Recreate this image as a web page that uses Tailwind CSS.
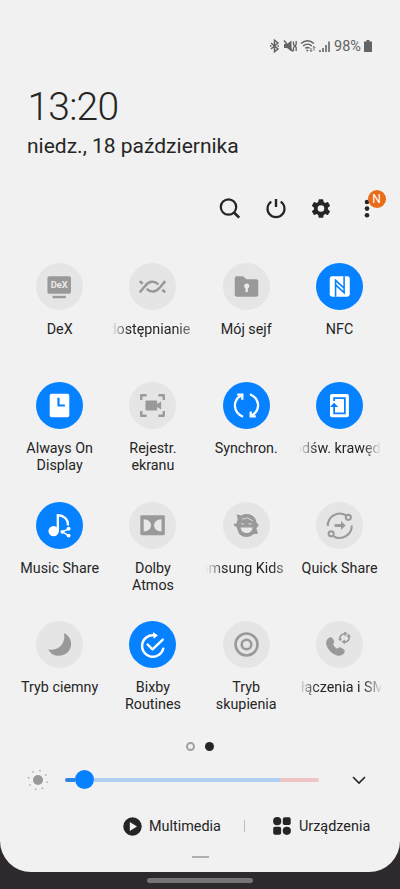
<!DOCTYPE html>
<html lang="pl">
<head>
<meta charset="utf-8">
<title>Panel szybkich ustawień</title>
<script src="https://cdn.jsdelivr.net/npm/@tailwindcss/browser@4"></script>
</head>
<body class="w-[400px] h-[889px] overflow-hidden bg-[#2e292c] font-[Roboto,sans-serif] text-[#252525]">
<main class="w-[400px] h-[872px] rounded-b-[31px] bg-[#f1f1f1] flex flex-col">

  <!-- Status bar -->
  <header class="h-[60px] pt-[37px] pr-[28.5px] flex justify-end items-start text-[#646464] shrink-0">
    <svg width="76" height="18" viewBox="0 0 76 18" fill="none" stroke="#646464">
      <path d="M1 6l7 6-3.500 2.800V3.200L8 6l-7 6" stroke-width="1.500"/><path d="M0 9h1.500M7.500 9h1.500" stroke-width="1.600"/>
      <path d="M14 7h3l4.500-3.500v11L17 11h-3z" fill="#646464" stroke="none"/><path d="M14 3.500l9 11" stroke-width="1.400"/><path d="M23.500 4.500v2.500l1 2-1 2v3M26.200 4v3l-.8 2 .8 2v3" stroke-width="1.300"/>
      <path d="M31 6.500c4-3.500 9-3.500 13 0M33 9c3-2.500 6-2.500 9 0M35.200 11.300c1.600-1.200 3-1.200 4.400 0" stroke-width="1.400"/><circle cx="37.300" cy="13.500" r="1" fill="#646464" stroke="none"/><path d="M41 11v3.500M39.800 13.300l1.200 1.200 1.200-1.200M44 13.500v-4M42.800 10.700l1.200-1.200 1.200 1.200" stroke-width=".9"/>
      <path d="M50 13v2M53 11v4M56 8v7M59 4.500v10.500" stroke-width="1.600"/>
    </svg>
    <span class="-ml-[12px] text-[14.5px] leading-[20px] w-[28.5px] whitespace-nowrap">98%</span>
    <svg class="mt-[2px] ml-[1px]" width="8" height="14" viewBox="0 0 8 14"><path d="M2.500 1h3v1.500H8V13H0V2.500h2.500z" fill="#646464"/></svg>
  </header>

  <section class="pl-[27.5px] h-[122px] shrink-0">
    <h1 class="pt-[24px] text-[39px] leading-[46px] font-light tracking-[-0.8px]">13:20</h1>
    <p class="-ml-[0.5px] mt-[3px] text-[21px] leading-[26px] whitespace-nowrap">niedz., 18 października</p>
  </section>

  <nav class="h-[80.5px] pt-[14px] pl-[218px] flex gap-[21.5px] shrink-0">
    <svg width="24" height="24" viewBox="0 0 24 24" fill="none" stroke="#252525" stroke-width="2.200"><circle cx="10.500" cy="11" r="7.700"/><path d="M16 16.500l5.200 5.200" stroke-width="2.600"/></svg>
    <svg width="24" height="24" viewBox="0 0 24 24" fill="none" stroke="#252525" stroke-width="2.200"><path d="M7.300 5.600a8.500 8.500 0 1 0 9.400 0"/><path d="M12 3v8" stroke-width="2.400"/></svg>
    <svg width="24" height="24" viewBox="0 0 24 24"><path transform="translate(.3 .9) scale(.97)" fill="#252525" fill-rule="evenodd" d="M19.140 12.940c.04-.3.060-.61.060-.94s-.02-.64-.07-.94l2.030-1.580a.5.5 0 0 0 .12-.61l-1.920-3.320a.5.5 0 0 0-.59-.22l-2.390.96a7 7 0 0 0-1.620-.94l-.36-2.540a.5.500 0 0 0-.48-.41h-3.840a.5.500 0 0 0-.47.41l-.36 2.540a7 7 0 0 0-1.620.94l-2.390-.96a.5.500 0 0 0-.59.22L2.740 8.870a.5.500 0 0 0 .12.610l2.030 1.580a6 6 0 0 0 0 1.880l-2.030 1.580a.5.500 0 0 0-.12.610l1.920 3.320c.12.220.37.290.59.220l2.390-.96c.5.380 1.030.7 1.620.94l.36 2.540c.05.240.24.410.48.410h3.840c.24 0 .44-.17.470-.41l.36-2.540a7 7 0 0 0 1.620-.94l2.390.96c.22.080.47 0 .59-.22l1.920-3.320a.5.500 0 0 0-.12-.61zM12 15.400a3.400 3.400 0 1 1 0-6.800 3.400 3.400 0 0 1 0 6.800z"/></svg>
    <div class="relative">
      <svg width="24" height="24" viewBox="0 0 24 24" fill="#252525"><circle cx="12" cy="6" r="2.300"/><circle cx="12" cy="12.600" r="2.300"/><circle cx="12" cy="19.200" r="2.300"/></svg>
      <span class="absolute left-[13px] -top-[6.5px] w-[18px] h-[18px] rounded-full bg-[#e86c1a] text-white text-[12px] leading-[18px] text-center">N</span>
    </div>
  </nav>

  <section class="grid grid-cols-4 w-[373.2px] ml-[13px] auto-rows-[119.5px] h-[477px] shrink-0 text-[14.3px] leading-[17px] text-center">

    <div class="flex flex-col items-center">
      <svg width="47" height="47" viewBox="0 0 48 48"><circle cx="24" cy="24" r="24" fill="#e5e5e5"/><rect x="11.700" y="13.500" width="24" height="18" rx="1.800" fill="#999"/><rect x="17" y="33.500" width="13.500" height="2.500" fill="#999"/><text x="23.700" y="26" font-size="9.600" font-weight="700" fill="#e9e9e9" text-anchor="middle" font-family="Roboto">DeX</text></svg>
      <span class="mt-[11px]">DeX</span>
    </div>

    <div class="flex flex-col items-center">
      <svg width="47" height="47" viewBox="0 0 48 48" fill="none" stroke="#999" stroke-width="2.500"><circle cx="24" cy="24" r="24" fill="#e5e5e5" stroke="none"/><path d="M11 30l5-6c4.500-5.500 9.500-6.500 14-2.200M37 18.500l-5 6c-4.500 5.500-9.500 6.200-14 1.800M11 18.500l3 2.700M34 27.300l3 2.700"/></svg>
      <span class="mt-[11px] w-[81px] overflow-hidden flex justify-end pr-[3px] whitespace-nowrap mask-[linear-gradient(to_right,transparent_0,#000_17px,#000_62px,#0008_78px)]">Udostępnianie</span>
    </div>

    <div class="flex flex-col items-center">
      <svg width="47" height="47" viewBox="0 0 48 48"><circle cx="24" cy="24" r="24" fill="#e5e5e5"/><path d="M12 15.500q0-2 2-2h6.500l3.500 3h10q2 0 2 2V32.500q0 2-2 2H14q-2 0-2-2z" fill="#999"/><circle cx="24.200" cy="23.500" r="2.600" fill="#e9e9e9"/><path d="M23 24h2.400v5.800H23z" fill="#e9e9e9"/></svg>
      <span class="mt-[11px]">Mój sejf</span>
    </div>

    <div class="flex flex-col items-center">
      <svg width="47" height="47" viewBox="0 0 48 48"><circle cx="24" cy="24" r="24" fill="#0681ff"/><rect x="14" y="13.500" width="20.500" height="21" rx="2.500" fill="#fff"/><path d="M20 34.500V17.700l8.700 8M28.700 13.500v16.800L20 22.300" fill="none" stroke="#0681ff" stroke-width="1.600"/></svg>
      <span class="mt-[11px]">NFC</span>
    </div>

    <div class="flex flex-col items-center">
      <svg width="47" height="47" viewBox="0 0 48 48"><circle cx="24" cy="24" r="24" fill="#0681ff"/><rect x="14" y="12" width="20" height="24" rx="2" fill="#fff"/><path d="M23 16v8h6.500" fill="none" stroke="#0681ff" stroke-width="2.200"/></svg>
      <span class="mt-[11px]">Always On<br>Display</span>
    </div>

    <div class="flex flex-col items-center">
      <svg width="47" height="47" viewBox="0 0 48 48"><circle cx="24" cy="24" r="24" fill="#e5e5e5"/><path d="M12.500 18.500v-5h5.500M30 13.500h5.500v5M35.500 29.500v5h-5.500M18 34.500h-5.500v-5" fill="none" stroke="#999" stroke-width="2.400" stroke-linejoin="round"/><rect x="16.800" y="19" width="12" height="10" rx="1" fill="#999"/><path d="M28 23l4.800-3v8L28 25z" fill="#999"/></svg>
      <span class="mt-[11px]">Rejestr.<br>ekranu</span>
    </div>

    <div class="flex flex-col items-center">
      <svg width="47" height="47" viewBox="0 0 48 48" fill="none" stroke="#fff" stroke-width="2.300"><circle cx="24" cy="24" r="24" fill="#0681ff" stroke="none"/><path d="M20.500 35.500C10 31 9.500 19 18.500 13.800M27.500 12.500c10.500 4.500 11 16.500 2 21.700"/><path d="M14.500 12.800h5.200v5.200M33.500 35.200h-5.200v-5.200"/></svg>
      <span class="mt-[11px]">Synchron.</span>
    </div>

    <div class="flex flex-col items-center">
      <svg width="47" height="47" viewBox="0 0 48 48"><circle cx="24" cy="24" r="24" fill="#0681ff"/><rect x="14.300" y="12.300" width="19.300" height="23.700" rx="2" fill="#fff"/><path d="M18.500 19.500v-3h11v15.500h-11V24" fill="none" stroke="#0681ff" stroke-width="1.800"/><path d="M14.300 25.500l4.200-4.200 4.200 4.200z" fill="#0681ff"/></svg>
      <span class="mt-[11px] w-[82px] overflow-hidden flex justify-center whitespace-nowrap mask-[linear-gradient(to_right,transparent_0,#000_18px,#000_64px,transparent_82px)]"><span class="shrink-0 ml-[-3px]">Podśw. krawędzi</span></span>
    </div>

    <div class="flex flex-col items-center">
      <svg width="47" height="47" viewBox="0 0 48 48"><circle cx="24" cy="24" r="24" fill="#0681ff"/><circle cx="18" cy="29.700" r="5.300" fill="#fff"/><path d="M22.300 30V13.500c5.500 0 10.700 3.500 10.300 10.500" fill="none" stroke="#fff" stroke-width="2.400"/><path d="M33.300 27.500l-6.300 3 6.300 3.800" fill="none" stroke="#fff" stroke-width="1.500"/><g fill="#fff"><circle cx="33.300" cy="27.300" r="2"/><circle cx="27" cy="30.500" r="2"/><circle cx="33.300" cy="34.300" r="2"/></g></svg>
      <span class="mt-[11px] whitespace-nowrap">Music Share</span>
    </div>

    <div class="flex flex-col items-center">
      <svg width="47" height="47" viewBox="0 0 48 48"><circle cx="24" cy="24" r="24" fill="#e5e5e5"/><rect x="11.600" y="13.500" width="25" height="20.500" rx="1.500" fill="#999"/><path d="M15 17.500c10 0 10 12.500 0 12.500zM33.200 17.500c-10 0-10 12.500 0 12.500z" fill="#e9e9e9"/></svg>
      <span class="mt-[11px]">Dolby<br>Atmos</span>
    </div>

    <div class="flex flex-col items-center">
      <svg width="47" height="47" viewBox="0 0 48 48"><circle cx="24" cy="24" r="24" fill="#e5e5e5"/><path d="M14 12.500l4.500 1.200c5-2.700 12-1.500 15 4.300l1 3.500q2.500 1 1.300 3.500l-1.800 1.500 1.800 6-4.500.2c-4.500 4.500-12 4-15.300-1l-2-6q-3.500-1-3-3.500h2.500l1.500-4z" fill="#999"/><path d="M18 26h12.200c-.5 3.800-2.800 5.600-6.100 5.600S18.500 29.800 18 26z" fill="#e9e9e9"/><path d="M19.500 17.500l5.500-1.200 5.500 3" stroke="#d9d9d9" stroke-width="1" fill="none"/><path d="M18.500 22.300h3M26 22.300h3" stroke="#d0d0d0" stroke-width="1.200"/></svg>
      <span class="mt-[11px] w-[81px] overflow-hidden flex justify-end pr-[3px] whitespace-nowrap mask-[linear-gradient(to_right,transparent_0,#000_18px,#000_64px,#0008_79px)]">Samsung Kids</span>
    </div>

    <div class="flex flex-col items-center">
      <svg width="47" height="47" viewBox="0 0 48 48" fill="none" stroke="#999" stroke-width="2.100"><circle cx="24" cy="24" r="24" fill="#e5e5e5" stroke="none"/><path d="M12 24.500A12.300 12.300 0 0 1 30.500 13.500M36.500 24A12.300 12.300 0 0 1 18 35"/><circle cx="33" cy="15.700" r="2.600"/><circle cx="15.500" cy="32.500" r="2.600"/><path d="M19 24h7" stroke-width="3"/><path d="M25.500 19.500l4.700 4.500-4.700 4.500z" fill="#999" stroke="none"/></svg>
      <span class="mt-[11px] whitespace-nowrap">Quick Share</span>
    </div>

    <div class="flex flex-col items-center">
      <svg width="47" height="47" viewBox="0 0 48 48"><circle cx="24" cy="24" r="24" fill="#e5e5e5"/><path d="M28.500 12.300c9 4 9.500 15.500 3 20.500-6.500 5-16 3-19-4 10 3 18.500-6 16-16.500z" fill="#999"/></svg>
      <span class="mt-[11px] whitespace-nowrap">Tryb ciemny</span>
    </div>

    <div class="flex flex-col items-center">
      <svg width="47" height="47" viewBox="0 0 48 48" fill="none" stroke="#fff" stroke-width="2.400"><circle cx="24" cy="24" r="24" fill="#0681ff" stroke="none"/><path d="M25.500 14.600A11 11 0 1 0 35 28.200" stroke-linecap="round"/><path d="M24.500 11.200l5 3.500-4.300 3.300z" fill="#fff" stroke="none"/><path d="M19 24l5 5 10.500-10" stroke-linecap="round" stroke-linejoin="round"/></svg>
      <span class="mt-[11px]">Bixby<br>Routines</span>
    </div>

    <div class="flex flex-col items-center">
      <svg width="47" height="47" viewBox="0 0 48 48" fill="none" stroke="#999"><circle cx="24" cy="24" r="24" fill="#e5e5e5" stroke="none"/><circle cx="24" cy="24" r="11.200" stroke-width="2.600"/><circle cx="24" cy="24" r="4.900" stroke-width="2.600"/></svg>
      <span class="mt-[11px]">Tryb<br>skupienia</span>
    </div>

    <div class="flex flex-col items-center">
      <svg width="47" height="47" viewBox="0 0 48 48"><circle cx="24" cy="24" r="24" fill="#e5e5e5"/><path d="M13 18.500c1.500-1.500 2.700-1.200 3.500 0l1.200 2.300c.6 1.500-1.500 2.200-1.200 3.200 1 2.500 3 4.300 5.200 5.300 1.200.2 1.700-2 3.200-1.500l2.700 1.700c1.200 1 1.200 2-.3 3.500-3 3-8 1.500-12-2.500-4-4.200-5.500-9-2.300-12z" fill="#999" stroke="#999" stroke-width="1.800"/><path d="M24.500 18.500q-.6-4.500 4.500-5.500M33.500 15.700q1.200 5-4.200 5.800" fill="none" stroke="#999" stroke-width="1.700"/><path d="M28.500 10.800l3.800 1.700-3 3.300zM29.500 19l.2 4.800-3.700-2.500zM22.500 18h4.200l-1.900 2.600zM31 16h4.800l-2.500-3z" fill="#999"/></svg>
      <span class="mt-[11px] w-[82px] overflow-hidden flex justify-center whitespace-nowrap mask-[linear-gradient(to_right,transparent_0,#000_18px,#000_64px,transparent_84px)]"><span class="shrink-0 -ml-[2px]">Połączenia i SMS</span></span>
    </div>
  </section>

  <div class="h-[13px] flex justify-center gap-[10px] items-center shrink-0">
    <span class="w-[9px] h-[9px] rounded-full border-2 border-[#a0a0a0]"></span>
    <span class="w-[9px] h-[9px] rounded-full bg-[#252525]"></span>
  </div>

  <div class="h-[54.5px] pl-[26px] flex items-center shrink-0">
    <svg width="24" height="24" viewBox="0 0 24 24" fill="#999"><circle cx="12" cy="12" r="5"/><circle cx="14" cy="2.800" r=".8"/><circle cx="7" cy="4" r=".8"/><circle cx="2.700" cy="9.800" r=".8"/><circle cx="4" cy="17" r=".8"/><circle cx="9.700" cy="21.200" r=".8"/><circle cx="16.500" cy="20.200" r=".8"/><circle cx="21" cy="14.300" r=".8"/><circle cx="19.800" cy="7" r=".8"/></svg>
    <div class="ml-[15px] w-[254px] flex items-center">
      <span class="w-[10px] h-[4px] rounded-l-full bg-[#2c86df]"></span>
      <span class="w-[19px] h-[19px] rounded-full bg-[#0681ff]"></span>
      <span class="w-[186px] h-[4px] bg-[#aecff1]"></span>
      <span class="w-[39px] h-[4px] rounded-r-full bg-[#efc4c4]"></span>
    </div>
    <svg class="ml-[32px]" width="16" height="16" viewBox="0 0 16 16" fill="none" stroke="#252525" stroke-width="1.600"><path d="M2 5l6 6 6-6"/></svg>
  </div>

  <div class="h-[38px] pl-[123px] flex items-center text-[14.4px] shrink-0">
    <svg width="19" height="19" viewBox="0 0 19 19"><circle cx="9.500" cy="9.500" r="9.200" fill="#252525"/><path d="M6.800 4.900l7.200 4.600-7.200 4.600z" fill="#f1f1f1"/></svg>
    <span class="ml-[7px] mt-px w-[72px] whitespace-nowrap">Multimedia</span>
    <span class="ml-[23px] w-px h-[12px] bg-[#bdbdbd]"></span>
    <svg class="ml-[28px]" width="18" height="18" viewBox="0 0 18 18" fill="#252525"><circle cx="4.200" cy="4.200" r="4.100"/><rect x="9.800" y=".2" width="7.900" height="7.900" rx="1.800"/><rect x=".2" y="9.800" width="7.900" height="7.900" rx="1.800"/><circle cx="13.800" cy="13.800" r="4.100"/></svg>
    <span class="ml-[8px] mt-px">Urządzenia</span>
  </div>
  <span class="mt-[10.5px] mx-auto w-[17px] h-[2px] bg-[#b0b0b0]"></span>
</main>
<span class="block mt-[6px] mx-auto w-[106px] h-[5px] rounded-full bg-[#777476]"></span>
</body>
</html>
